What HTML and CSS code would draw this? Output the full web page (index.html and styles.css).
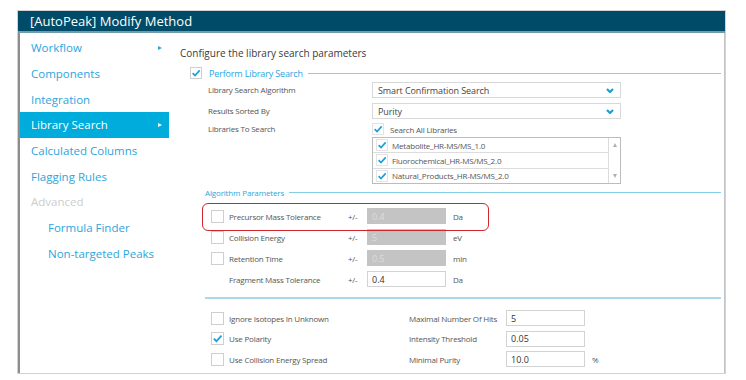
FILE: index.html
```html
<!DOCTYPE html>
<html lang="en">
    <head>
        <meta charset="UTF-8">
        <title>[AutoPeak] Modify Method</title>
        <link rel="stylesheet" href="styles.css">
    </head>
    <body>

        <div class="window">

            <div class="titlebar">[AutoPeak] Modify Method</div>

            <div class="win_body">

                <ul class="nav">
                    <li class="nav_item has_arrow">Workflow</li>
                    <li class="nav_item">Components</li>
                    <li class="nav_item">Integration</li>
                    <li class="nav_item has_arrow active">Library Search</li>
                    <li class="nav_item">Calculated Columns</li>
                    <li class="nav_item">Flagging Rules</li>
                    <li class="nav_item disabled">Advanced</li>
                    <li class="nav_item sub">Formula Finder</li>
                    <li class="nav_item sub">Non-targeted Peaks</li>
                </ul>

                <div class="main">
                    <h1 class="heading">Configure the library search parameters</h1>

                    <!-- Perform Library Search -->
                    <div class="group_title first">
                        <span class="check on"><svg viewBox="0 0 12 12"><path d="M2 6.2 L4.8 9 L10.4 2.8"/></svg></span>
                        <span class="group_name">Perform Library Search</span>
                        <span class="rule"></span>
                    </div>

                    <div class="search_grid">
                        <div class="lbl">Library Search Algorithm</div>
                        <div class="select">
                            <span>Smart Confirmation Search</span>
                            <svg class="chev" viewBox="0 0 8 5"><path d="M1 1 L4 4 L7 1"/></svg>
                        </div>

                        <div class="lbl">Results Sorted By</div>
                        <div class="select">
                            <span>Purity</span>
                            <svg class="chev" viewBox="0 0 8 5"><path d="M1 1 L4 4 L7 1"/></svg>
                        </div>

                        <div class="lbl short">Libraries To Search</div>
                        <div class="check_line">
                            <span class="check on"><svg viewBox="0 0 12 12"><path d="M2 6.2 L4.8 9 L10.4 2.8"/></svg></span>
                            <span>Search All Libraries</span>
                        </div>

                        <div></div>
                        <div class="listbox">
                            <div class="list_rows">
                                <div class="list_row">
                                    <span class="check on"><svg viewBox="0 0 12 12"><path d="M2 6.2 L4.8 9 L10.4 2.8"/></svg></span>
                                    <span>Metabolite_HR-MS/MS_1.0</span>
                                </div>
                                <div class="list_row">
                                    <span class="check on"><svg viewBox="0 0 12 12"><path d="M2 6.2 L4.8 9 L10.4 2.8"/></svg></span>
                                    <span>Fluorochemical_HR-MS/MS_2.0</span>
                                </div>
                                <div class="list_row">
                                    <span class="check on"><svg viewBox="0 0 12 12"><path d="M2 6.2 L4.8 9 L10.4 2.8"/></svg></span>
                                    <span>Natural_Products_HR-MS/MS_2.0</span>
                                </div>
                            </div>
                            <div class="scrollbar">
                                <span class="arrow_up"></span>
                                <span class="arrow_down"></span>
                            </div>
                        </div>
                    </div>

                    <!-- Algorithm Parameters -->
                    <div class="group_title second">
                        <span class="group_name small">Algorithm Parameters</span>
                        <span class="rule"></span>
                    </div>

                    <div class="params">
                        <div class="param_row highlight">
                            <span class="check"></span>
                            <span class="p_lbl">Precursor Mass Tolerance</span>
                            <span class="pm">+/-</span>
                            <span class="field off">0.4</span>
                            <span class="unit">Da</span>
                        </div>
                        <div class="param_row">
                            <span class="check"></span>
                            <span class="p_lbl">Collision Energy</span>
                            <span class="pm">+/-</span>
                            <span class="field off">5</span>
                            <span class="unit">eV</span>
                        </div>
                        <div class="param_row">
                            <span class="check"></span>
                            <span class="p_lbl">Retention Time</span>
                            <span class="pm">+/-</span>
                            <span class="field off">0.5</span>
                            <span class="unit">min</span>
                        </div>
                        <div class="param_row">
                            <span class="check blank"></span>
                            <span class="p_lbl">Fragment Mass Tolerance</span>
                            <span class="pm">+/-</span>
                            <span class="field">0.4</span>
                            <span class="unit">Da</span>
                        </div>
                    </div>

                    <div class="separator"></div>

                    <div class="options">
                        <span class="check"></span>
                        <span class="o_lbl">Ignore Isotopes In Unknown</span>
                        <span class="o_lbl">Maximal Number Of Hits</span>
                        <span class="field">5</span>
                        <span class="unit"></span>

                        <span class="check on"><svg viewBox="0 0 12 12"><path d="M2 6.2 L4.8 9 L10.4 2.8"/></svg></span>
                        <span class="o_lbl">Use Polarity</span>
                        <span class="o_lbl">Intensity Threshold</span>
                        <span class="field">0.05</span>
                        <span class="unit"></span>

                        <span class="check"></span>
                        <span class="o_lbl">Use Collision Energy Spread</span>
                        <span class="o_lbl">Minimal Purity</span>
                        <span class="field">10.0</span>
                        <span class="unit">%</span>
                    </div>
                </div>

            </div>

        </div>

    </body>
</html>
```

FILE: styles.css
```css
* {
    margin: 0;
    padding: 0;
    box-sizing: border-box;
}

body {
    background-color: white;
    font-family: "Open Sans", "Noto Sans", sans-serif;
    color: #555555;
}

.window {
    width: 709px;
    height: 364px;
    margin: 10px 0 0 17px;
    border: 1px solid #d2d2d2;
    display: flex;
    flex-direction: column;
    overflow: hidden;
}

.titlebar {
    height: 22px;
    background-color: #004b68;
    border-bottom: 2px solid #6f9bad;
    color: white;
    font-size: 13px;
    line-height: 20px;
    padding-left: 12px;
}

.win_body {
    flex: 1;
    display: flex;
    border-left: 2px solid #8d8d8d;
    border-right: 1px solid #c4c4c4;
}

/* left menu */

.nav {
    width: 149px;
    flex-shrink: 0;
    list-style: none;
    padding-top: 2px;
}

.nav_item {
    height: 25.7px;
    display: flex;
    align-items: center;
    padding-left: 11px;
    font-size: 11.5px;
    color: #2ba6dc;
}

.nav_item.has_arrow::after {
    content: "";
    margin-left: auto;
    margin-right: 7px;
    border-left: 4px solid currentColor;
    border-top: 2.5px solid transparent;
    border-bottom: 2.5px solid transparent;
}

.nav_item.active {
    background-color: #00acdc;
    color: white;
}

.nav_item.disabled {
    color: #cdcdcd;
}

.nav_item.sub {
    padding-left: 28px;
}

/* main area */

.main {
    flex: 1;
    padding: 13px 3px 0 11px;
}

.heading {
    font-size: 10px;
    font-weight: normal;
    line-height: 14px;
    color: #3a3a3a;
}

.group_title {
    display: flex;
    align-items: center;
    height: 14px;
}

.group_title.first {
    margin-top: 6px;
    padding-left: 10px;
}

.group_title.second {
    margin-top: 3px;
    height: 10px;
    padding-left: 25px;
}

.group_name {
    font-size: 9px;
    letter-spacing: -0.15px;
    color: #2ba6dc;
    margin-left: 7px;
}

.group_name.small {
    font-size: 8px;
    margin-left: 0;
}

.rule {
    flex: 1;
    height: 1px;
    background-color: #86cde6;
    margin-left: 5px;
}

.check {
    width: 13px;
    height: 13px;
    border: 1px solid #cfcfcf;
    background-color: white;
    display: inline-flex;
    flex-shrink: 0;
}

.check.blank {
    visibility: hidden;
}

.check svg {
    width: 100%;
    height: 100%;
}

.check svg path {
    fill: none;
    stroke: #1a9fda;
    stroke-width: 2;
}

.group_title .check {
    width: 12px;
    height: 12px;
}

/* library search */

.search_grid {
    display: grid;
    grid-template-columns: 164px 249px;
    grid-template-rows: 21px 19px 15px 47px;
    align-items: start;
    margin-top: 2px;
    padding-left: 28px;
}

.lbl {
    font-size: 8px;
    letter-spacing: -0.2px;
    line-height: 16px;
    color: #555555;
}

.lbl.short {
    line-height: 14px;
}

.select {
    height: 16px;
    border: 1px solid #d8d8d8;
    display: flex;
    align-items: center;
    padding: 0 6px 0 5px;
    font-size: 9px;
    letter-spacing: -0.1px;
    color: #444444;
}

.chev {
    width: 8px;
    height: 5px;
    margin-left: auto;
}

.chev path {
    fill: none;
    stroke: #1a9fda;
    stroke-width: 2.2;
}

.check_line {
    height: 14px;
    display: flex;
    align-items: center;
    font-size: 8px;
    letter-spacing: -0.2px;
    color: #555555;
}

.check_line .check,
.list_row .check {
    border-color: #e3e3e3;
    width: 12px;
    height: 12px;
}

.check_line span:last-child {
    margin-left: 6px;
}

.listbox {
    height: 47px;
    border: 1px solid #bcbcbc;
    display: flex;
}

.list_rows {
    flex: 1;
    display: flex;
    flex-direction: column;
}

.list_row {
    flex: 1;
    display: flex;
    align-items: center;
    border-bottom: 1px solid #dcdcdc;
    padding-left: 3px;
    font-size: 8px;
    letter-spacing: -0.2px;
    color: #555555;
}

.list_row:last-child {
    border-bottom: none;
}

.list_row span:last-child {
    margin-left: 4px;
}

.scrollbar {
    width: 12px;
    border-left: 1px solid #dcdcdc;
    display: flex;
    flex-direction: column;
    align-items: center;
    justify-content: space-between;
    padding: 5px 0;
}

.arrow_up {
    border-bottom: 4px solid #b0b0b0;
    border-left: 2.5px solid transparent;
    border-right: 2.5px solid transparent;
}

.arrow_down {
    border-top: 4px solid #b0b0b0;
    border-left: 2.5px solid transparent;
    border-right: 2.5px solid transparent;
}

/* algorithm parameters */

.params {
    margin-top: 8.5px;
}

.param_row {
    height: 21px;
    display: flex;
    align-items: center;
    padding-left: 31px;
    font-size: 8px;
    letter-spacing: -0.2px;
    color: #555555;
}

.param_row.highlight {
    position: relative;
}

.param_row.highlight::after {
    content: "";
    position: absolute;
    left: 22px;
    top: -2.5px;
    width: 285px;
    height: 26px;
    border: 1.5px solid #d2252e;
    border-radius: 6px;
}

.p_lbl {
    width: 119px;
    margin-left: 5px;
}

.pm {
    width: 19px;
}

.field {
    width: 79px;
    height: 16px;
    border: 1px solid #d3d3d3;
    background-color: white;
    display: flex;
    align-items: center;
    padding-left: 4px;
    font-size: 9px;
    letter-spacing: 0;
    color: #333333;
    flex-shrink: 0;
}

.field.off {
    background-color: #c4c4c4;
    border-color: #c4c4c4;
    color: #dcdcdc;
}

.unit {
    margin-left: 7px;
    font-size: 8px;
    color: #555555;
}

.separator {
    height: 2px;
    background-color: #a8d8ea;
    margin: 7px 0 0 25px;
}

/* other options */

.options {
    display: grid;
    grid-template-columns: 18px 180px 97px 79px auto;
    grid-auto-rows: 20.5px;
    align-items: center;
    margin-top: 9.5px;
    padding-left: 31px;
    font-size: 8px;
    letter-spacing: -0.2px;
    color: #555555;
}

.options .check {
    width: 13px;
    height: 13px;
}
```
